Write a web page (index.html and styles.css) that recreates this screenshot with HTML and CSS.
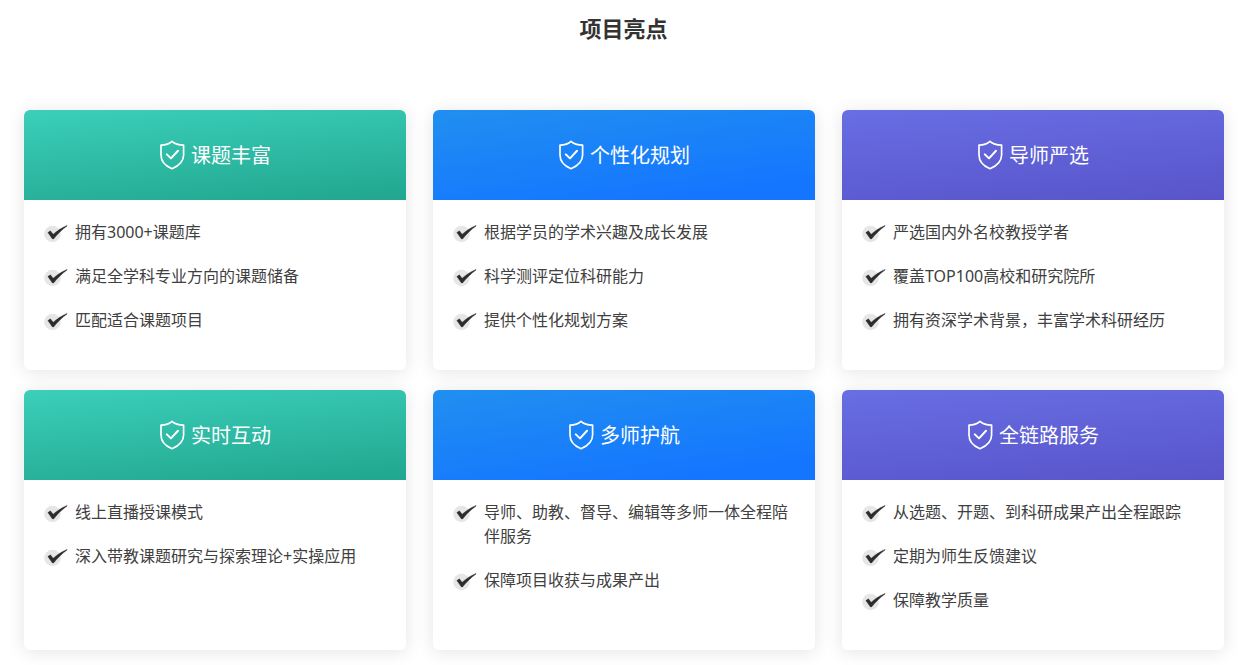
FILE: index.html
```html
<!DOCTYPE html>
<html lang="zh-CN">
<head>
<meta charset="utf-8">
<title>项目亮点</title>
<link rel="stylesheet" href="styles.css">
</head>
<body>
<svg class="defs" width="0" height="0" aria-hidden="true">
  <symbol id="shield" viewBox="0 0 26 30">
    <path d="M13 1.3 C15.5 3.6 19.5 5 24.6 5.2 V15 C24.6 21.5 19.5 26 13 28.7 C6.5 26 2 21.5 2 15 V5.2 C6.5 5 10.5 3.6 13 1.3 Z" fill="none" stroke="#fff" stroke-width="1.7" stroke-linejoin="round"/>
    <path d="M7.8 14.4 L12 18.4 L19 10.8" fill="none" stroke="#fff" stroke-width="2" stroke-linecap="round" stroke-linejoin="round"/>
  </symbol>
  <symbol id="tick" viewBox="0 0 24 20">
    <circle cx="8.5" cy="11" r="8.3" fill="#e6e6e6"/>
    <path d="M3.8 9.6 L6.4 7.8 L9.2 11.2 C13 7.8 18 4.4 23 2.4 L23.2 3 C18 6.6 13.8 10.8 9.6 16 L8.4 16 Z" fill="#2c2c2c" stroke="#2c2c2c" stroke-width="0.3" stroke-linejoin="round"/>
  </symbol>
</svg>
<main class="page">
  <h1 class="title">项目亮点</h1>
  <section class="grid">
    <article class="card">
      <header class="head teal"><svg class="shield"><use href="#shield"/></svg><h2>课题丰富</h2></header>
      <ul class="list">
        <li><svg class="tick"><use href="#tick"/></svg><span>拥有3000+课题库</span></li>
        <li><svg class="tick"><use href="#tick"/></svg><span>满足全学科专业方向的课题储备</span></li>
        <li><svg class="tick"><use href="#tick"/></svg><span>匹配适合课题项目</span></li>
      </ul>
    </article>
    <article class="card">
      <header class="head blue"><svg class="shield"><use href="#shield"/></svg><h2>个性化规划</h2></header>
      <ul class="list">
        <li><svg class="tick"><use href="#tick"/></svg><span>根据学员的学术兴趣及成长发展</span></li>
        <li><svg class="tick"><use href="#tick"/></svg><span>科学测评定位科研能力</span></li>
        <li><svg class="tick"><use href="#tick"/></svg><span>提供个性化规划方案</span></li>
      </ul>
    </article>
    <article class="card">
      <header class="head purple"><svg class="shield"><use href="#shield"/></svg><h2>导师严选</h2></header>
      <ul class="list">
        <li><svg class="tick"><use href="#tick"/></svg><span>严选国内外名校教授学者</span></li>
        <li><svg class="tick"><use href="#tick"/></svg><span>覆盖TOP100高校和研究院所</span></li>
        <li><svg class="tick"><use href="#tick"/></svg><span>拥有资深学术背景，丰富学术科研经历</span></li>
      </ul>
    </article>
    <article class="card">
      <header class="head teal"><svg class="shield"><use href="#shield"/></svg><h2>实时互动</h2></header>
      <ul class="list">
        <li><svg class="tick"><use href="#tick"/></svg><span>线上直播授课模式</span></li>
        <li><svg class="tick"><use href="#tick"/></svg><span>深入带教课题研究与探索理论+实操应用</span></li>
      </ul>
    </article>
    <article class="card">
      <header class="head blue"><svg class="shield"><use href="#shield"/></svg><h2>多师护航</h2></header>
      <ul class="list">
        <li><svg class="tick"><use href="#tick"/></svg><span>导师、助教、督导、编辑等多师一体全程陪伴服务</span></li>
        <li><svg class="tick"><use href="#tick"/></svg><span>保障项目收获与成果产出</span></li>
      </ul>
    </article>
    <article class="card">
      <header class="head purple"><svg class="shield"><use href="#shield"/></svg><h2>全链路服务</h2></header>
      <ul class="list">
        <li><svg class="tick"><use href="#tick"/></svg><span>从选题、开题、到科研成果产出全程跟踪</span></li>
        <li><svg class="tick"><use href="#tick"/></svg><span>定期为师生反馈建议</span></li>
        <li><svg class="tick"><use href="#tick"/></svg><span>保障教学质量</span></li>
      </ul>
    </article>
  </section>
</main>
</body>
</html>
```
FILE: styles.css
```css
* { box-sizing: border-box; }
html, body { margin: 0; padding: 0; background: #fff; }
body {
  font-family: "Noto Sans", "Noto Sans CJK SC", "Liberation Sans", sans-serif;
  color: #333;
  height: 665px;
  overflow: hidden;
}
.defs { display: block; height: 0; }
.page { padding: 0 20px 0 24px; }
.title {
  margin: 0;
  height: 110px;
  padding: 12px 1px 0 0;
  text-align: center;
  font-family: "Noto Sans CJK SC", sans-serif;
  font-size: 22px;
  line-height: 30px;
  font-weight: 700;
  color: #333;
}
.grid {
  display: grid;
  grid-template-columns: repeat(3, 382px);
  grid-auto-rows: 260px;
  column-gap: 27px;
  row-gap: 20px;
}
.card {
  background: #fff;
  border-radius: 6px;
  overflow: hidden;
  box-shadow: 0 2px 18px rgba(0, 0, 0, 0.11);
}
.head {
  height: 90px;
  display: flex;
  align-items: center;
  justify-content: center;
  gap: 6px;
  color: #fff;
}
.head h2 {
  margin: 0;
  padding-top: 1px;
  font-size: 20px;
  line-height: 28px;
  font-weight: 400;
}
.teal { background: linear-gradient(175deg, #3bcfba 0%, #21a68f 100%); }
.blue { background: linear-gradient(172deg, #218ff0 0%, #1476ff 85%, #1476ff 100%); }
.purple { background: linear-gradient(175deg, #686ee3 0%, #5954ca 100%); }
.shield { width: 26px; height: 30px; flex: none; }
.list {
  list-style: none;
  margin: 0;
  padding: 20px 20px 0 20px;
}
.list li {
  display: flex;
  align-items: flex-start;
  font-size: 16px;
  line-height: 24px;
  margin-bottom: 20px;
  color: #404040;
}
.tick { width: 24px; height: 20px; flex: none; margin-top: 3px; margin-right: 7px; }
```
